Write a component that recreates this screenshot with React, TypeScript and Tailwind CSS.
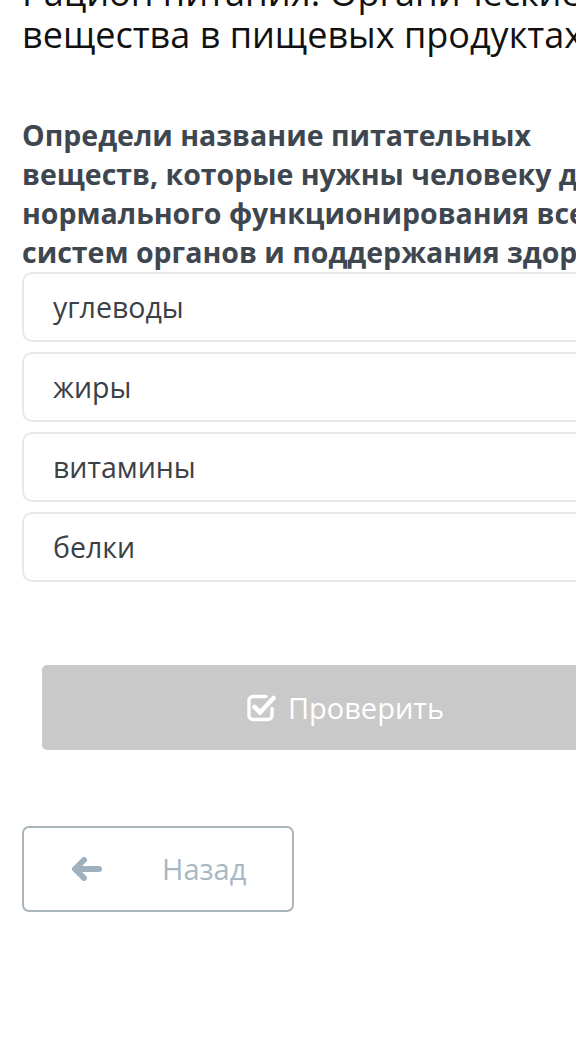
import React from "react";

const options = ["углеводы", "жиры", "витамины", "белки"];

function CheckSquareIcon() {
  return (
    <svg width="30" height="30" viewBox="0 0 30 30" fill="none">
      <path
        d="M20 3.5H7a4 4 0 0 0-4 4v15a4 4 0 0 0 4 4h15a4 4 0 0 0 4-4v-7"
        stroke="white"
        strokeWidth="3.4"
        strokeLinecap="round"
      />
      <path
        d="M8.5 14l5.5 5.5L27.5 5"
        stroke="white"
        strokeWidth="4.6"
        strokeLinecap="round"
        strokeLinejoin="round"
      />
    </svg>
  );
}

function ArrowLeftIcon() {
  return (
    <svg width="30" height="24" viewBox="0 0 30 24" fill="none">
      <path
        d="M12 3L3 12l9 9M4 12h23"
        stroke="#9fb1bf"
        strokeWidth="6"
        strokeLinecap="round"
        strokeLinejoin="round"
      />
    </svg>
  );
}

export default function App() {
  return (
    <div
      className="w-[576px] h-[1048px] overflow-hidden bg-white"
      style={{ fontFamily: '"Open Sans", "Noto Sans", sans-serif' }}
    >
      <div className="w-[690px] px-[22px]">
        <h1 className="-mt-[28px] text-[36px] leading-[42px] text-[#111] whitespace-nowrap">
          Рацион питания. Органические
          <br />
          вещества в пищевых продуктах
        </h1>

        <p className="mt-[60px] text-[28.5px] leading-[39px] font-bold text-[#3e474f] whitespace-nowrap">
          Определи название питательных
          <br />
          веществ, которые нужны человеку для
          <br />
          нормального функционирования всех
          <br />
          систем органов и поддержания здоровья
        </p>

        <div className="flex flex-col gap-[10px]">
          {options.map((o) => (
            <div
              key={o}
              className="h-[70px] flex items-center pl-[29px] rounded-[10px] border-2 border-[#e6e8e9] text-[28.5px] text-[#3c4146]"
            >
              {o}
            </div>
          ))}
        </div>

        <div className="px-[20px] mt-[83px]">
          <button className="w-full h-[85px] rounded-[5px] bg-[#c9c9c9] flex items-center justify-center gap-[12px] text-white text-[29px]">
            <CheckSquareIcon />
            <span>Проверить</span>
          </button>
        </div>

        <button className="mt-[76px] w-[272px] h-[86px] rounded-[7px] border-2 border-[#a9b4ba] flex items-center pl-[48px] text-[29px] text-[#a7b8c4]">
          <ArrowLeftIcon />
          <span className="ml-[60px]">Назад</span>
        </button>
      </div>
    </div>
  );
}
